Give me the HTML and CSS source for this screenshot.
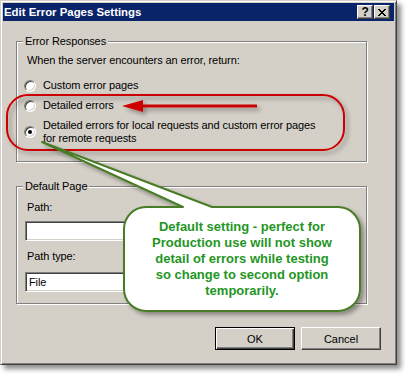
FILE: index.html
```html
<!DOCTYPE html>
<html lang="en">
<head>
  <meta charset="UTF-8">
  <title>Edit Error Pages Settings</title>
  <meta name="viewport" content="width=device-width, initial-scale=1.0">
  <link rel="stylesheet" href="styles.css">
</head>
<body>
  <div class="window">
    <div class="titlebar">
      <span class="title">Edit Error Pages Settings</span>
      <div class="caption-btns">
        <span class="cap-btn help">?</span>
        <span class="cap-btn">
          <svg width="8" height="7" viewBox="0 0 8 7">
            <path d="M0 0h2v1h-2zM6 0h2v1h-2zM1 1h2v1h-2zM5 1h2v1h-2zM2 2h4v1h-4zM3 3h2v1h-2zM2 4h4v1h-4zM1 5h2v1h-2zM5 5h2v1h-2zM0 6h2v1h-2zM6 6h2v1h-2z" fill="#000"/>
          </svg>
        </span>
      </div>
    </div>

    <div class="client">
      <div class="group">
        <div class="legend">Error Responses</div>
        <p class="intro">When the server encounters an error, return:</p>
        <label class="radio first"><span class="radio-box"></span><span>Custom error pages</span></label>
        <label class="radio"><span class="radio-box"></span><span>Detailed errors</span></label>
        <label class="radio"><span class="radio-box checked"></span><span>Detailed errors for local requests and custom error pages<br>for remote requests</span></label>
      </div>

      <div class="group group-default">
        <div class="legend">Default Page</div>
        <div class="field-label first">Path:</div>
        <div class="textbox"></div>
        <div class="field-label">Path type:</div>
        <div class="textbox">File</div>
      </div>

      <div class="buttons">
        <button class="btn btn-default">OK</button>
        <button class="btn">Cancel</button>
      </div>
    </div>
  </div>

  <!-- annotations drawn over the screenshot -->
  <svg class="annotations" width="406" height="375" viewBox="0 0 406 375">
    <defs>
      <filter id="shadow" x="-10%" y="-10%" width="130%" height="140%">
        <feDropShadow dx="3" dy="3" stdDeviation="2" flood-color="#000" flood-opacity="0.35"/>
      </filter>
    </defs>
    <g filter="url(#shadow)">
      <rect x="7" y="95" width="337" height="55" rx="21" fill="none" stroke="#cc0000" stroke-width="2"/>
      <line x1="140" y1="106" x2="257" y2="106" stroke="#cc0000" stroke-width="3"/>
      <polygon points="122,106 143,100 143,112" fill="#cc0000"/>
    </g>
    <path filter="url(#shadow)" fill="#fff" stroke="#4a7c25" stroke-width="2" stroke-linejoin="round"
      d="M146 207 L183 207 L42 142 L212 207 L338 207 A22 22 0 0 1 360 229 L360 289 A22 22 0 0 1 338 311 L146 311 A22 22 0 0 1 124 289 L124 229 A22 22 0 0 1 146 207 Z"/>
  </svg>

  <div class="callout-text">
    Default setting - perfect for<br>
    Production use will not show<br>
    detail of errors while testing<br>
    so change to second option<br>
    temporarily.
  </div>
</body>
</html>
```

FILE: styles.css
```css
* {
  margin: 0;
  padding: 0;
  box-sizing: border-box;
}

body {
  position: relative;
  width: 406px;
  height: 375px;
  background: #fff;
  font-family: 'Liberation Sans', Arial, sans-serif;
  font-size: 11px;
  letter-spacing: -0.1px;
  color: #000;
  overflow: hidden;
}

.window {
  width: 397px;
  height: 365px;
  padding: 2px;
  background: #d4d0c8;
  border: 1px solid;
  border-color: #d4d0c8 #404040 #404040 #d4d0c8;
  box-shadow: inset 1px 1px 0 #fff, inset -1px -1px 0 #808080, 4px 4px 5px rgba(0, 0, 0, 0.45);
}

.titlebar {
  height: 18px;
  background: #0a246a;
  display: flex;
  align-items: center;
  justify-content: space-between;
  padding: 0 4px 0 1px;
}

.title {
  color: #fff;
  font-weight: bold;
  font-size: 11.4px;
  letter-spacing: 0;
}

.caption-btns {
  display: flex;
  gap: 1px;
}

.cap-btn {
  width: 16px;
  height: 14px;
  display: flex;
  align-items: center;
  justify-content: center;
  background: #d4d0c8;
  border: 1px solid;
  border-color: #fff #404040 #404040 #fff;
  box-shadow: inset -1px -1px 0 #808080;
}

.cap-btn.help {
  font-weight: bold;
  font-size: 12px;
  line-height: 12px;
}

.client {
  padding: 20px 27px 0 13px;
}

.group {
  border: 1px solid #808080;
  box-shadow: 1px 1px 0 #fff, inset 1px 1px 0 #fff;
  padding: 0 10px 16px 10px;
}

.legend {
  display: table;
  margin: -7px 0 0 -4px;
  padding: 0 2px;
  background: #d4d0c8;
  line-height: 13px;
}

.intro {
  margin-top: 6px;
  line-height: 13px;
}

.radio {
  display: flex;
  align-items: center;
  gap: 7px;
  margin: 7px 0 0 -3px;
  line-height: 13px;
}

.radio.first {
  margin-top: 12px;
}

.radio-box {
  flex: none;
  position: relative;
  width: 12px;
  height: 12px;
  border-radius: 50%;
  background: #fff;
  border: 1px solid;
  border-color: #808080 #fff #fff #808080;
  box-shadow: inset 1px 1px 0 #404040, inset -1px -1px 0 #d4d0c8;
}

.radio-box.checked::after {
  content: '';
  position: absolute;
  left: 3px;
  top: 3px;
  width: 4px;
  height: 4px;
  border-radius: 50%;
  background: #000;
}

.group-default {
  margin-top: 24px;
  padding-bottom: 11px;
}

.field-label {
  margin-top: 9px;
  line-height: 13px;
}

.field-label.first {
  margin-top: 8px;
}

.textbox {
  margin: 7px 0 0 -2px;
  width: 331px;
  height: 20px;
  background: #fff;
  border: 1px solid;
  border-color: #808080 #fff #fff #808080;
  box-shadow: inset 1px 1px 0 #404040, inset -1px -1px 0 #d4d0c8;
  padding: 0 3px;
  line-height: 18px;
}

.textbox + .field-label + .textbox {
  margin-top: 9px;
}

.buttons {
  display: flex;
  justify-content: flex-end;
  gap: 6px;
  margin: 23px -14px 0 0;
}

.btn {
  width: 80px;
  height: 23px;
  font: inherit;
  color: #000;
  background: #d4d0c8;
  border: 1px solid;
  border-color: #fff #404040 #404040 #fff;
  box-shadow: inset -1px -1px 0 #808080;
}

.btn-default {
  border: 1px solid #000;
  box-shadow: inset 1px 1px 0 #fff, inset -1px -1px 0 #404040, inset -2px -2px 0 #808080;
}

.annotations {
  position: absolute;
  left: 0;
  top: 0;
  pointer-events: none;
}

.callout-text {
  position: absolute;
  left: 124px;
  top: 207px;
  width: 236px;
  height: 104px;
  display: flex;
  align-items: center;
  justify-content: center;
  text-align: center;
  color: #1f961f;
  font-weight: bold;
  font-size: 13px;
  line-height: 16px;
  letter-spacing: 0;
}
```
